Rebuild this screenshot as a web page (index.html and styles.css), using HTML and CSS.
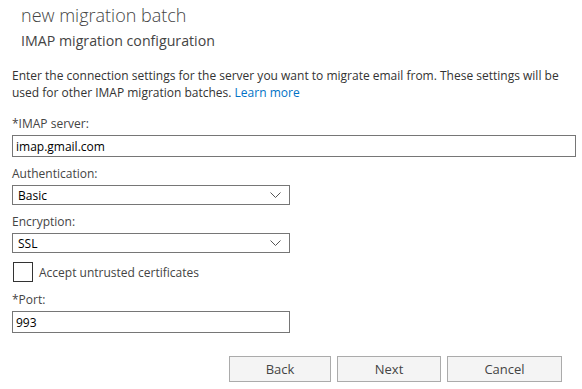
FILE: index.html
```html
<!DOCTYPE html>
<html lang="en">
<head>
    <meta charset="UTF-8">
    <meta name="viewport" content="width=device-width, initial-scale=1.0">
    <title>new migration batch</title>
    <link rel="stylesheet" href="styles.css">
</head>
<body>
    <div class="page">
        <div class="header">
            <h1>new migration batch</h1>
            <h2>IMAP migration configuration</h2>
        </div>

        <p class="intro">Enter the connection settings for the server you want to migrate email from. These settings will be used for other IMAP migration batches. <a href="#">Learn more</a></p>

        <div class="field">
            <label for="server">*IMAP server:</label>
            <input type="text" id="server" class="wide" value="imap.gmail.com">
        </div>

        <div class="field">
            <label>Authentication:</label>
            <div class="select">
                <span>Basic</span>
                <svg width="11" height="6" viewBox="0 0 11 6"><path d="M0.5 0.5 L5.5 5.5 L10.5 0.5" fill="none" stroke="#555" stroke-width="1"/></svg>
            </div>
        </div>

        <div class="field">
            <label>Encryption:</label>
            <div class="select">
                <span>SSL</span>
                <svg width="11" height="6" viewBox="0 0 11 6"><path d="M0.5 0.5 L5.5 5.5 L10.5 0.5" fill="none" stroke="#555" stroke-width="1"/></svg>
            </div>
        </div>

        <div class="check">
            <span class="box"></span>
            <span>Accept untrusted certificates</span>
        </div>

        <div class="field port">
            <label for="port">*Port:</label>
            <input type="text" id="port" class="narrow" value="993">
        </div>

        <div class="buttons">
            <button class="back">Back</button>
            <button class="next">Next</button>
            <button class="cancel">Cancel</button>
        </div>
    </div>
</body>
</html>
```

FILE: styles.css
```css
body {
    margin: 0;
    font-family: "Open Sans", Arial, sans-serif;
    color: #333;
    background: #fff;
}
.page {
    padding: 0 6px 0 12px;
}
.header {
    padding-left: 9px;
}
h1 {
    margin: 0;
    padding-top: 3px;
    font-size: 18px;
    font-weight: 300;
    color: #444;
    line-height: 24px;
}
h2 {
    margin: 4px 0 0;
    font-size: 14.2px;
    font-weight: 400;
    color: #444;
    line-height: 20px;
}
.intro {
    margin: 16px 0 14px;
    font-size: 12px;
    line-height: 17px;
    color: #333;
}
.intro a {
    color: #0072c6;
    text-decoration: none;
}
.field {
    margin-top: 8px;
}
.field.port {
    margin-top: 9px;
}
.field label {
    display: block;
    font-size: 12px;
    line-height: 17px;
    margin-bottom: 3px;
    color: #444;
}
input[type="text"] {
    display: block;
    height: 22px;
    padding: 0 3px;
    border: 1px solid #767676;
    font-family: inherit;
    font-size: 12px;
    color: #000;
    box-sizing: border-box;
    outline: none;
}
.wide {
    width: 564px;
}
.narrow {
    width: 278px;
}
.select {
    display: flex;
    align-items: center;
    justify-content: space-between;
    width: 278px;
    height: 20px;
    padding: 0 8px 0 5px;
    border: 1px solid #767676;
    box-sizing: border-box;
    font-size: 12px;
    color: #000;
}
.check {
    display: flex;
    align-items: center;
    gap: 6px;
    margin-top: 9px;
    font-size: 12px;
    color: #444;
}
.box {
    width: 20px;
    height: 20px;
    border: 1px solid #333;
    box-sizing: border-box;
    margin-left: 1px;
}
.buttons {
    display: flex;
    gap: 6px;
    margin: 23px 14px 0 0;
    justify-content: flex-end;
}
button {
    height: 26px;
    border: 1px solid #ababab;
    background: #f4f4f4;
    font-family: inherit;
    font-size: 13px;
    color: #444;
    box-sizing: border-box;
}
.back {
    width: 102px;
}
.next {
    width: 104px;
}
.cancel {
    width: 115px;
}
```
